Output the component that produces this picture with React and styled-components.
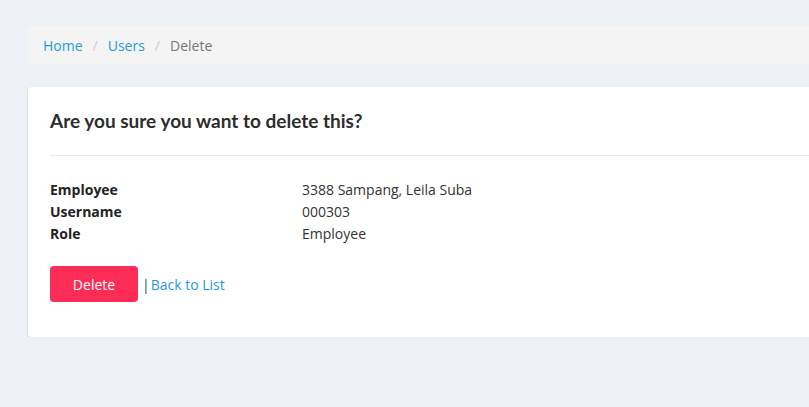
import React from "react";
import styled, { createGlobalStyle } from "styled-components";

const Global = createGlobalStyle`
    html, body {
        margin: 0;
        padding: 0;
        background: #eef1f5;
        font-family: "Open Sans", "Noto Sans", sans-serif;
        color: #333;
    }
`;

const Page = styled.div`
    padding: 26px 0 0 28px;
    width: 900px;
`;

const Crumbs = styled.ol`
    display: flex;
    align-items: center;
    height: 38px;
    margin: 0 0 23px;
    padding: 0 15px;
    list-style: none;
    background: #f4f4f4;
    border-radius: 4px;
    font-size: 14px;

    li + li::before {
        content: "/";
        color: #ccc;
        padding: 0 10px;
    }
`;

const Crumb = styled.li`
    color: ${(p) => (p.$active ? "#777" : "#1f9bde")};
`;

const Card = styled.section`
    background: #fff;
    border-radius: 3px;
    box-shadow: 0 1px 2px rgba(0, 0, 0, 0.22);
    padding: 0 22px 35px;
`;

const Title = styled.h3`
    margin: 0;
    padding: 22px 0 22px;
    font-family: Lato, sans-serif;
    font-weight: 700;
    font-size: 19px;
    line-height: 24px;
    color: #2d2d2d;
    border-bottom: 1px solid #eaeaea;
`;

const Details = styled.dl`
    display: grid;
    grid-template-columns: 252px 1fr;
    margin: 23px 0 21px;
    font-size: 14px;
    line-height: 22px;

    dt {
        font-weight: 700;
        color: #222;
    }
    dd {
        margin: 0;
        color: #333;
    }
`;

const Actions = styled.div`
    display: flex;
    align-items: center;
    gap: 4px;
    font-size: 14px;
`;

const DeleteBtn = styled.button`
    box-sizing: border-box;
    width: 88px;
    height: 36px;
    border: none;
    border-radius: 4px;
    background: #fb2c55;
    color: #fff;
    font-family: inherit;
    font-size: 14px;
`;

const Sep = styled.span`
    color: #2c4a6e;
`;

const BackLink = styled.a`
    color: #1f9bde;
    text-decoration: none;
    margin-left: -3px;
`;

const rows = [
    ["Employee", "3388 Sampang, Leila Suba"],
    ["Username", "000303"],
    ["Role", "Employee"],
];

export default function App() {
    return (
        <Page>
            <Global />
            <Crumbs>
                <Crumb>Home</Crumb>
                <Crumb>Users</Crumb>
                <Crumb $active>Delete</Crumb>
            </Crumbs>
            <Card>
                <Title>Are you sure you want to delete this?</Title>
                <Details>
                    {rows.map(([k, v]) => (
                        <React.Fragment key={k}>
                            <dt>{k}</dt>
                            <dd>{v}</dd>
                        </React.Fragment>
                    ))}
                </Details>
                <Actions>
                    <DeleteBtn>Delete</DeleteBtn>
                    <Sep>|</Sep>
                    <BackLink href="#">Back to List</BackLink>
                </Actions>
            </Card>
        </Page>
    );
}
